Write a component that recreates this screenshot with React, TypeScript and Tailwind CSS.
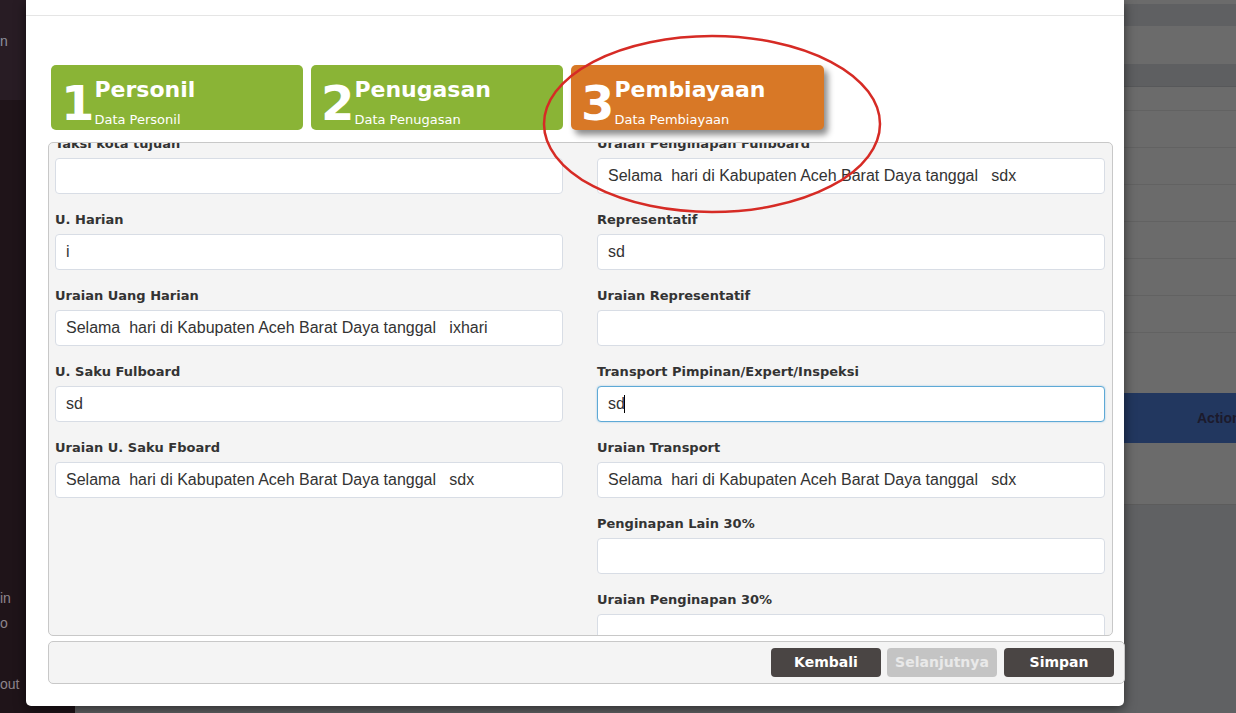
import React from 'react'

const leftFields = [
    { label: 'Taksi kota tujuan', value: '' },
    { label: 'U. Harian', value: 'i' },
    { label: 'Uraian Uang Harian', value: 'Selama  hari di Kabupaten Aceh Barat Daya tanggal   ixhari' },
    { label: 'U. Saku Fulboard', value: 'sd' },
    { label: 'Uraian U. Saku Fboard', value: 'Selama  hari di Kabupaten Aceh Barat Daya tanggal   sdx' },
]

const rightFields = [
    { label: 'Uraian Penginapan Fullboard', value: 'Selama  hari di Kabupaten Aceh Barat Daya tanggal   sdx' },
    { label: 'Representatif', value: 'sd' },
    { label: 'Uraian Representatif', value: '' },
    { label: 'Transport Pimpinan/Expert/Inspeksi', value: 'sd', focused: true },
    { label: 'Uraian Transport', value: 'Selama  hari di Kabupaten Aceh Barat Daya tanggal   sdx' },
    { label: 'Penginapan Lain 30%', value: '' },
    { label: 'Uraian Penginapan 30%', value: '' },
]

const steps = [
    { no: '1', title: 'Personil', sub: 'Data Personil', active: false },
    { no: '2', title: 'Penugasan', sub: 'Data Penugasan', active: false },
    { no: '3', title: 'Pembiayaan', sub: 'Data Pembiayaan', active: true },
]

function Field({ label, value, focused }: { label: string; value: string; focused?: boolean }) {
    return (
        <div className="mb-[17px]">
            <div className="text-[13px] leading-[18px] font-bold text-[#333] mb-[5px]">{label}</div>
            <div className="relative">
                <input
                    readOnly
                    value={value}
                    className={
                        focused
                            ? 'w-full h-[36px] px-[10px] bg-white rounded-[4px] border border-[#5ea9d6] shadow-[0_0_2px_rgba(94,169,214,0.6)] outline-none text-[16px] text-[#333] font-["Liberation_Sans",Arial,sans-serif]'
                            : 'w-full h-[36px] px-[10px] bg-white rounded-[4px] border border-[#d8dde5] outline-none text-[16px] text-[#333] font-["Liberation_Sans",Arial,sans-serif]'
                    }
                />
                {focused && <span className="absolute left-[27px] top-[9px] h-[18px] w-px bg-black" />}
            </div>
        </div>
    )
}

export default function App() {
    return (
        <div className="relative w-[1236px] h-[713px] overflow-hidden font-['DejaVu_Sans',Verdana,sans-serif]">
            {/* Background page */}
            <div className="flex h-full">
                {/* Sidebar */}
                <div className="w-[75px] shrink-0 flex flex-col bg-[#1f1419] text-[14px] text-[#8e858c] font-['Liberation_Sans',Arial,sans-serif]">
                    <div className="h-[100px] bg-[#281c24] pt-[31px] text-[#8d909c]">n</div>
                    <div className="mt-[490px] leading-[16px]">in</div>
                    <div className="mt-[9px] leading-[16px]">o</div>
                    <div className="mt-[45px] leading-[16px]">out</div>
                </div>

                {/* Main table area */}
                <div className="flex-1 flex flex-col bg-[#606163]">
                    <div className="h-[4px] bg-[#6b6b6b]" />
                    <div className="h-[22px] bg-[#5f6062]" />
                    <div className="h-[38px] bg-[#6b6b6b]" />
                    <div className="h-[23px] bg-[#5e5f61] border-b border-[#57585a]" />
                    <div className="h-[23px] bg-[#6b6b6b]" />
                    {[0, 1, 2, 3, 4, 5].map(i => (
                        <div key={i} className="h-[37px] bg-[#6b6b6b] border-t border-[#626262]" />
                    ))}
                    <div className="h-[61px] bg-[#6b6b6b] border-t border-[#626262]" />
                    <div className="h-[50px] bg-[#22375f] flex items-center pl-[1122px] text-[14px] font-bold text-[#1c1a2c] font-['Liberation_Sans',Arial,sans-serif]">
                        Action
                    </div>
                    <div className="h-[62px] bg-[#6b6b6b] border-b border-[#5c5c5c]" />
                </div>
            </div>

            {/* Modal */}
            <div className="absolute left-[26px] top-0 w-[1098px] h-[706px] bg-white rounded-b-[5px] shadow-[0_3px_12px_rgba(0,0,0,0.55)]">
                <div className="h-[16px] border-b border-[#e5e5e5]" />
                <div className="pl-[22px] pt-[49px]">
                    {/* Steps */}
                    <div className="flex gap-[8px] ml-[3px]">
                        {steps.map(s => (
                            <div
                                key={s.no}
                                className={
                                    s.active
                                        ? 'w-[253px] h-[65px] rounded-[5px] bg-[#d87826] flex items-start pl-[10px] text-white shadow-[4px_5px_6px_rgba(0,0,0,0.45)]'
                                        : 'w-[252px] h-[65px] rounded-[5px] bg-[#8ab436] flex items-start pl-[10px] text-white'
                                }
                            >
                                <div className="text-[48px] leading-[48px] font-bold mt-[14px]">{s.no}</div>
                                <div className="mt-[12px] flex flex-col">
                                    <div className="text-[22px] leading-[26px] font-bold">{s.title}</div>
                                    <div className="text-[13px] leading-[16px] mt-[9px]">{s.sub}</div>
                                </div>
                            </div>
                        ))}
                    </div>

                    {/* Form panel */}
                    <div className="mt-[12px] w-[1065px] h-[494px] rounded-[5px] border border-[#c8c8c8] bg-[#f4f4f4] overflow-hidden">
                        <div className="-mt-[8px] flex gap-[34px] pl-[6px] pr-[7px]">
                            <div className="w-[508px] flex flex-col">
                                {leftFields.map(f => (
                                    <Field key={f.label} label={f.label} value={f.value} />
                                ))}
                            </div>
                            <div className="w-[508px] flex flex-col">
                                {rightFields.map(f => (
                                    <Field key={f.label} label={f.label} value={f.value} focused={f.focused} />
                                ))}
                            </div>
                        </div>
                    </div>

                    {/* Footer */}
                    <div className="mt-[5px] w-[1077px] h-[43px] rounded-[5px] border border-[#c8c8c8] bg-[#f4f4f4] flex items-center justify-end pr-[10px]">
                        <button className="w-[110px] h-[29px] rounded-[4px] bg-[#4a4544] text-white text-[14px] font-bold">Kembali</button>
                        <button className="ml-[6px] w-[110px] h-[29px] rounded-[4px] bg-[#c4c4c4] text-[#e9e9e9] text-[14px] font-bold">Selanjutnya</button>
                        <button className="ml-[7px] w-[110px] h-[29px] rounded-[4px] bg-[#4a4544] text-white text-[14px] font-bold">Simpan</button>
                    </div>
                </div>
            </div>

            {/* Red annotation ellipse */}
            <svg className="absolute left-[540px] top-[33px]" width="346" height="183" viewBox="0 0 346 183">
                <ellipse cx="172" cy="91" rx="168" ry="88" fill="none" stroke="#d62b25" strokeWidth="2.5" />
            </svg>
        </div>
    )
}
